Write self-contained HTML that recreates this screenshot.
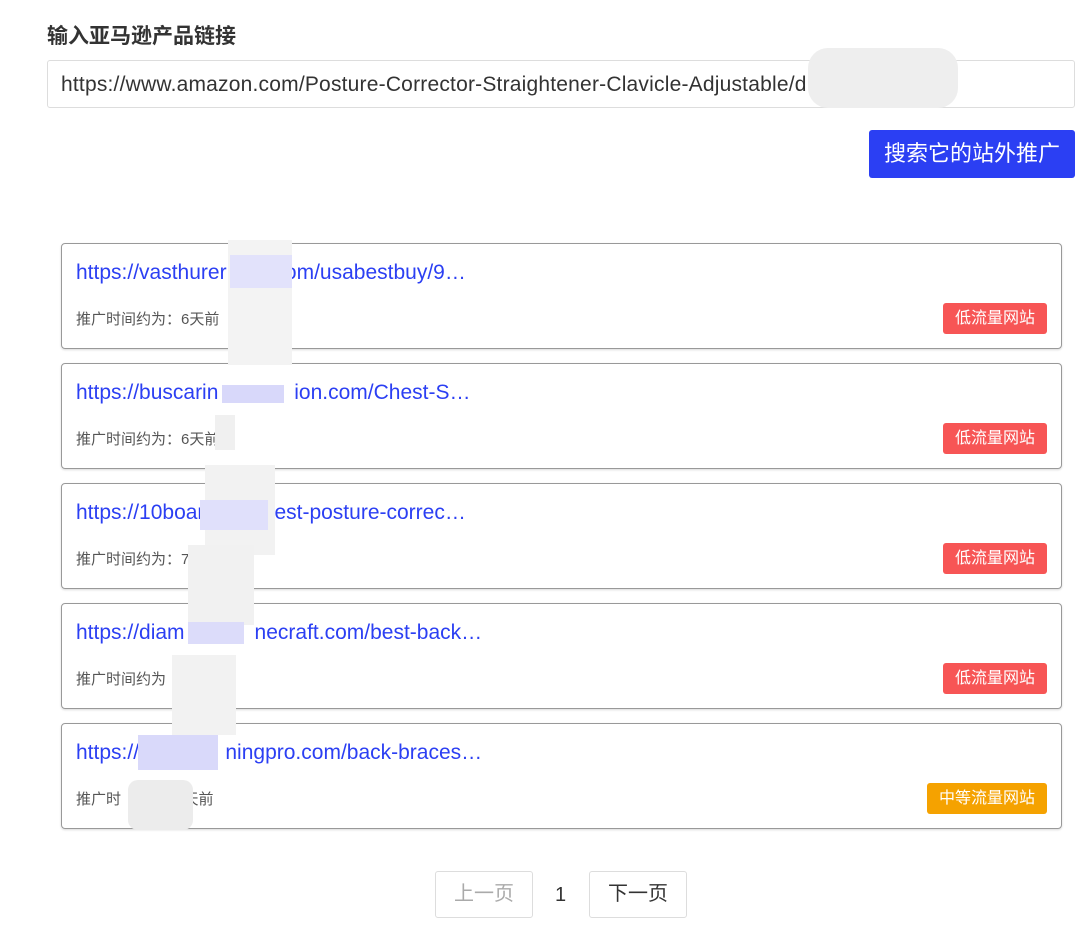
<!DOCTYPE html>
<html><head><meta charset="utf-8"><style>
*{margin:0;padding:0;box-sizing:border-box}
body{width:1080px;height:951px;background:#fff;font-family:"Liberation Sans","Noto Sans CJK SC",sans-serif;position:relative;overflow:hidden}
.abs{position:absolute}
h1{position:absolute;left:47px;top:20px;font-size:21px;font-weight:bold;color:#333}
.inp{left:47px;top:60px;width:1028px;height:48px;border:1px solid #ddd;border-radius:3px;font-size:21px;color:#333;padding:12px 0 0 13px;white-space:nowrap;overflow:hidden;letter-spacing:0.2px}
.btn{left:869px;top:130px;width:206px;height:48px;background:#2b3ff3;color:#fff;border-radius:3px;font-size:22px;text-align:center;line-height:48px}
.card{left:61px;width:1001px;height:106px;border:1px solid #999;border-radius:4px;box-shadow:0 1px 2px rgba(0,0,0,.15)}
.card .l{position:absolute;left:14px;top:17px;font-size:21px;color:#2b3ff3}
.card .m{position:absolute;left:14px;top:64px;font-size:15px;color:#555}
.card .b{position:absolute;right:14px;top:59px;width:104px;height:31px;border-radius:3px;background:#f75555;color:#fff;font-size:16px;text-align:center;line-height:31px}
.card .b.o{background:#f5a200;width:120px}
.pg{top:871px;width:98px;height:47px;border:1px solid #ddd;border-radius:3px;font-size:20px;text-align:center;line-height:45px}
.bl{position:absolute;background:#f0f0f0}
.bb{position:absolute;background:#dcdcfa}
</style></head><body>
<h1>输入亚马逊产品链接</h1>
<div class="abs inp">https://www.amazon.com/Posture-Corrector-Straightener-Clavicle-Adjustable/d</div>
<div class="bl" style="left:808px;top:48px;width:150px;height:60px;border-radius:20px;background:#eee"></div>
<div class="abs btn">搜索它的站外推广</div>

<div class="abs card" style="top:243px"><div class="l">https://vasthurer&nbsp;&nbsp;&nbsp;&nbsp;&nbsp;&nbsp;&nbsp;&nbsp;&nbsp;&nbsp;om/usabestbuy/9…</div><div class="m">推广时间约为：6天前</div><div class="b">低流量网站</div></div>
<div class="abs card" style="top:363px"><div class="l">https://buscarin&nbsp;&nbsp;&nbsp;&nbsp;&nbsp;&nbsp;&nbsp;&nbsp;&nbsp;&nbsp;&nbsp;&nbsp;&nbsp;ion.com/Chest-S…</div><div class="m">推广时间约为：6天前</div><div class="b">低流量网站</div></div>
<div class="abs card" style="top:483px"><div class="l">https://10boar&nbsp;&nbsp;&nbsp;&nbsp;&nbsp;&nbsp;&nbsp;&nbsp;&nbsp;&nbsp;best-posture-correc…</div><div class="m">推广时间约为：7</div><div class="b">低流量网站</div></div>
<div class="abs card" style="top:603px"><div class="l">https://diam&nbsp;&nbsp;&nbsp;&nbsp;&nbsp;&nbsp;&nbsp;&nbsp;&nbsp;&nbsp;&nbsp;&nbsp;necraft.com/best-back…</div><div class="m">推广时间约为</div><div class="b">低流量网站</div></div>
<div class="abs card" style="top:723px"><div class="l">https://k&nbsp;&nbsp;&nbsp;&nbsp;&nbsp;&nbsp;&nbsp;&nbsp;&nbsp;&nbsp;&nbsp;&nbsp;&nbsp;ningpro.com/back-braces…</div><div class="m">推广时&nbsp;&nbsp;&nbsp;&nbsp;&nbsp;&nbsp;&nbsp;&nbsp;&nbsp;&nbsp;&nbsp;16天前</div><div class="b o">中等流量网站</div></div>

<div class="bl" style="left:228px;top:240px;width:64px;height:125px;background:#f3f3f3"></div>
<div class="bb" style="left:230px;top:255px;width:62px;height:33px;background:#e2e2fb"></div>
<div class="bl" style="left:215px;top:415px;width:20px;height:35px"></div>
<div class="bb" style="left:222px;top:385px;width:62px;height:18px;background:#d8d8fa"></div>
<div class="bl" style="left:205px;top:465px;width:70px;height:90px;background:#f2f2f2"></div>
<div class="bb" style="left:200px;top:500px;width:68px;height:30px;background:#e0e0fb"></div>
<div class="bl" style="left:188px;top:545px;width:66px;height:80px;background:#f1f1f1"></div>
<div class="bb" style="left:188px;top:622px;width:56px;height:22px;background:#dcdcfa"></div>
<div class="bl" style="left:172px;top:655px;width:64px;height:80px;background:#f2f2f2"></div>
<div class="bb" style="left:138px;top:735px;width:80px;height:35px;background:#d9d9fa"></div>
<div class="bl" style="left:128px;top:780px;width:65px;height:50px;background:#ececec;border-radius:10px"></div>

<div class="abs pg" style="left:435px;color:#aaa">上一页</div>
<div class="abs" style="left:555px;top:884px;font-size:20px;color:#333">1</div>
<div class="abs pg" style="left:589px;color:#333">下一页</div>
</body></html>
